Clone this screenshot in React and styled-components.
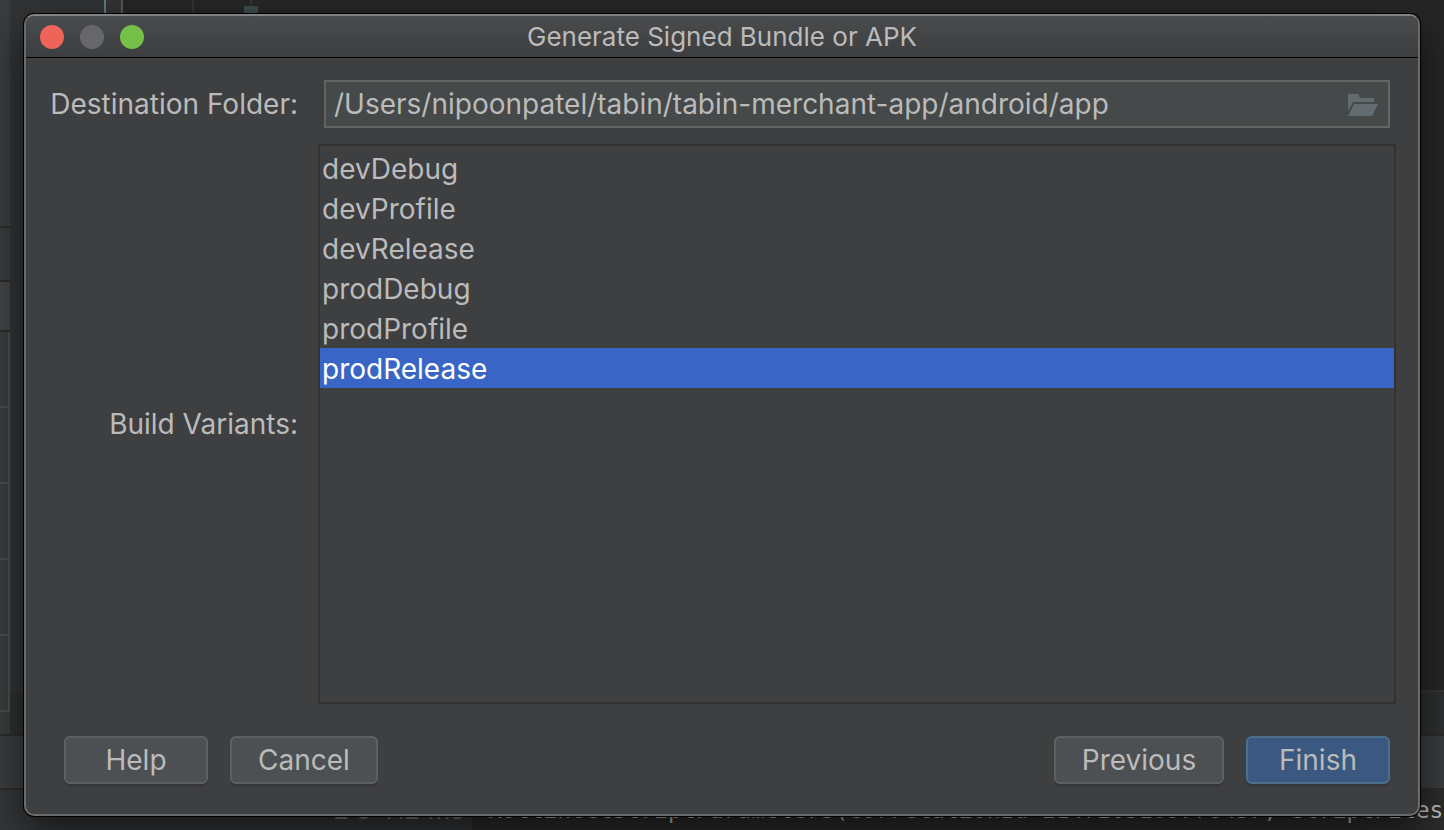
import styled, { createGlobalStyle } from 'styled-components';

const variants = [
  'devDebug',
  'devProfile',
  'devRelease',
  'prodDebug',
  'prodProfile',
  'prodRelease',
];

const App = () => {
  return (
    <>
      <GlobalStyle />
      <Desktop>
        <Ide aria-hidden='true'>
          <Workspace>
            <ToolStripe>
              <StripeCell $h={226} />
              <StripeCell $h={52} />
              <StripeCell $h={48} $active />
              <Gutter>
                <GutterCell $h={74} />
                <GutterCell $h={74} />
                <GutterCell $h={74} />
                <GutterCell $h={74} />
                <GutterCell $h={74} />
              </Gutter>
            </ToolStripe>
            <Main>
              <Files>
                <Project />
                <LineNumbers />
                <Editor>
                  <Guide />
                  <Guide>
                    <Marker />
                  </Guide>
                </Editor>
              </Files>
              <RunHeader />
            </Main>
          </Workspace>
          <RunBar />
          <Log>
            <LogTime>2 s 412 ms</LogTime>
            <LogText>KotlinGetScriptParameters(correlationId 2147263109776437, scriptFiles</LogText>
          </Log>
        </Ide>
        <Dialog role='dialog' aria-labelledby='title'>
          <TitleBar>
            <Lights>
              <Light type='button' aria-label='Close' $color='#ee6458' />
              <Light type='button' aria-label='Minimize' $color='#66676a' />
              <Light type='button' aria-label='Zoom' $color='#74c048' />
            </Lights>
            <Title id='title'>Generate Signed Bundle or APK</Title>
            <span />
          </TitleBar>
          <Form onSubmit={(e) => e.preventDefault()}>
            <Label htmlFor='folder'>Destination Folder:</Label>
            <Field>
              <PathInput
                id='folder'
                type='text'
                defaultValue='/Users/nipoonpatel/tabin/tabin-merchant-app/android/app'
              />
              <Browse type='button' aria-label='Browse'>
                <FolderIcon />
              </Browse>
            </Field>
            <Label htmlFor='variants'>Build Variants:</Label>
            <VariantList id='variants' size={6} defaultValue='prodRelease'>
              {variants.map((name) => (
                <Variant key={name}>{name}</Variant>
              ))}
            </VariantList>
          </Form>
          <Footer>
            <Group>
              <Button type='button' $w={144}>Help</Button>
              <Button type='button' $w={148}>Cancel</Button>
            </Group>
            <Group>
              <Button type='button' $w={170}>Previous</Button>
              <Button type='button' $w={144} $primary>Finish</Button>
            </Group>
          </Footer>
        </Dialog>
      </Desktop>
    </>
  );
};

const FolderIcon = () => (
  <svg width='30' height='22' viewBox='0 0 30 22' fill='#626c70'>
    <path d='M0 0h10l2.5 4H26v4H5L0 17z' />
    <path d='M6 10h24l-6 12H0z' />
  </svg>
);

const GlobalStyle = createGlobalStyle`
  body {
    margin: 0;
    background: #262626;
    color: #bbbbbb;
    font-family: Inter, 'Liberation Sans', sans-serif;
    font-size: 28px;
  }

  * {
    box-sizing: border-box;
  }
`;

const Desktop = styled.main`
  position: relative;
  display: flex;
  min-height: 100vh;
  padding: 14px 24px;
  overflow: hidden;
`;

const Ide = styled.div`
  position: absolute;
  inset: 0;
  display: flex;
  flex-direction: column;
  background: #262626;
`;

const Workspace = styled.div`
  display: flex;
  flex: 1;
  border-bottom: 2px solid #2b2b2b;
  overflow: hidden;
`;

const ToolStripe = styled.div`
  width: 10px;
  background: #393c3d;
`;

const StripeCell = styled.div`
  height: ${(props) => props.$h + 2}px;
  border-bottom: 2px solid #2b2b2b;
  background: ${(props) => (props.$active ? '#424445' : 'transparent')};
`;

const Gutter = styled.div`
  border-right: 2px solid #4b4d4e;
`;

const GutterCell = styled.div`
  height: ${(props) => props.$h + 2}px;
  border-bottom: 2px solid #4b4d4e;
`;

const Main = styled.div`
  display: flex;
  flex: 1;
  flex-direction: column;
`;

const Files = styled.div`
  display: flex;
  flex: 1;
`;

const Project = styled.div`
  width: 96px;
  background: #313335;
  border-right: 2px solid #5d7d78;
`;

const LineNumbers = styled.div`
  width: 17px;
  background: #313335;
  border-right: 2px solid #555657;
`;

const Editor = styled.div`
  display: flex;
  flex: 1;
  padding-left: 13px;
`;

const Guide = styled.div`
  width: 58px;
  border-right: 2px solid #343434;
`;

const Marker = styled.div`
  width: 14px;
  height: 8px;
  margin: 6px -8px 0 auto;
  background: #3a4b49;
`;

const RunHeader = styled.div`
  height: 44px;
  border-top: 2px solid #343536;
  background: #2d2f30;
`;

const RunBar = styled.div`
  height: 54px;
  border-bottom: 2px solid #2b2b2b;
  background: #3a3c3e;
`;

const Log = styled.div`
  display: flex;
  height: 40px;
  background: #2b2b2b;
  font-size: 23px;
  line-height: 40px;
  white-space: nowrap;
`;

const LogTime = styled.div`
  flex-shrink: 0;
  width: 472px;
  padding-right: 8px;
  background: #343638;
  color: #77797a;
  font-size: 26px;
  text-align: right;
`;

const LogText = styled.div`
  padding-left: 16px;
  font-family: 'DejaVu Sans Mono', monospace;
`;

const Dialog = styled.section`
  position: relative;
  display: flex;
  flex: 1;
  flex-direction: column;
  border: 2px solid #6a6b6c;
  border-top-color: #828384;
  border-radius: 10px;
  background: #3e3f41;
  box-shadow: 0 0 0 1px #000000, 0 16px 40px rgba(0, 0, 0, 0.6);
`;

const TitleBar = styled.header`
  display: grid;
  grid-template-columns: 1fr auto 1fr;
  align-items: center;
  height: 42px;
  padding: 0 14px;
  border-bottom: 1px solid #000000;
  border-radius: 8px 8px 0 0;
  background: linear-gradient(#4a4b4d, #3d3e40);
`;

const Lights = styled.div`
  display: flex;
  gap: 16px;
`;

const Light = styled.button`
  width: 24px;
  height: 24px;
  padding: 0;
  border: 0;
  border-radius: 50%;
  background: ${(props) => props.$color};
`;

const Title = styled.h1`
  margin: 0;
  font-size: 26px;
  font-weight: 400;
  line-height: 32px;
`;

const Form = styled.form`
  display: grid;
  grid-template-columns: 272px 1fr;
  grid-template-rows: 48px 1fr;
  gap: 16px 20px;
  flex: 1;
  padding: 22px 22px 0 0;
`;

const Label = styled.label`
  align-self: center;
  text-align: right;
`;

const Field = styled.div`
  display: flex;
  align-items: center;
  margin: 0 6px;
  border: 2px solid #646464;
  background: #45494a;
`;

const PathInput = styled.input`
  flex: 1;
  min-width: 0;
  padding: 0 8px;
  border: 0;
  outline: 0;
  background: transparent;
  color: inherit;
  font: inherit;
`;

const Browse = styled.button`
  display: flex;
  padding: 2px 10px 0;
  border: 0;
  background: transparent;
`;

const VariantList = styled.select`
  width: 100%;
  height: 100%;
  padding: 2px 0;
  border: 2px solid #323232;
  border-radius: 0;
  outline: 0;
  background: #3e3f41;
  color: inherit;
  font: inherit;
`;

const Variant = styled.option`
  height: 40px;
  min-height: 40px;
  padding: 4px 2px 2px;

  &:checked {
    background: #3966c6 linear-gradient(#3966c6, #3966c6);
    color: #ffffff;
  }
`;

const Footer = styled.footer`
  display: flex;
  justify-content: space-between;
  padding: 32px 28px 30px 38px;
`;

const Group = styled.div`
  display: flex;
  gap: 22px;
`;

const Button = styled.button`
  width: ${(props) => props.$w}px;
  height: 48px;
  padding: 0;
  border: 2px solid ${(props) => (props.$primary ? '#4c708c' : '#5e6060')};
  border-radius: 6px;
  background: ${(props) => (props.$primary ? '#3b5880' : '#4c5052')};
  box-shadow: 0 3px 0 #37383a;
  color: inherit;
  font: inherit;
`;

export default App;
